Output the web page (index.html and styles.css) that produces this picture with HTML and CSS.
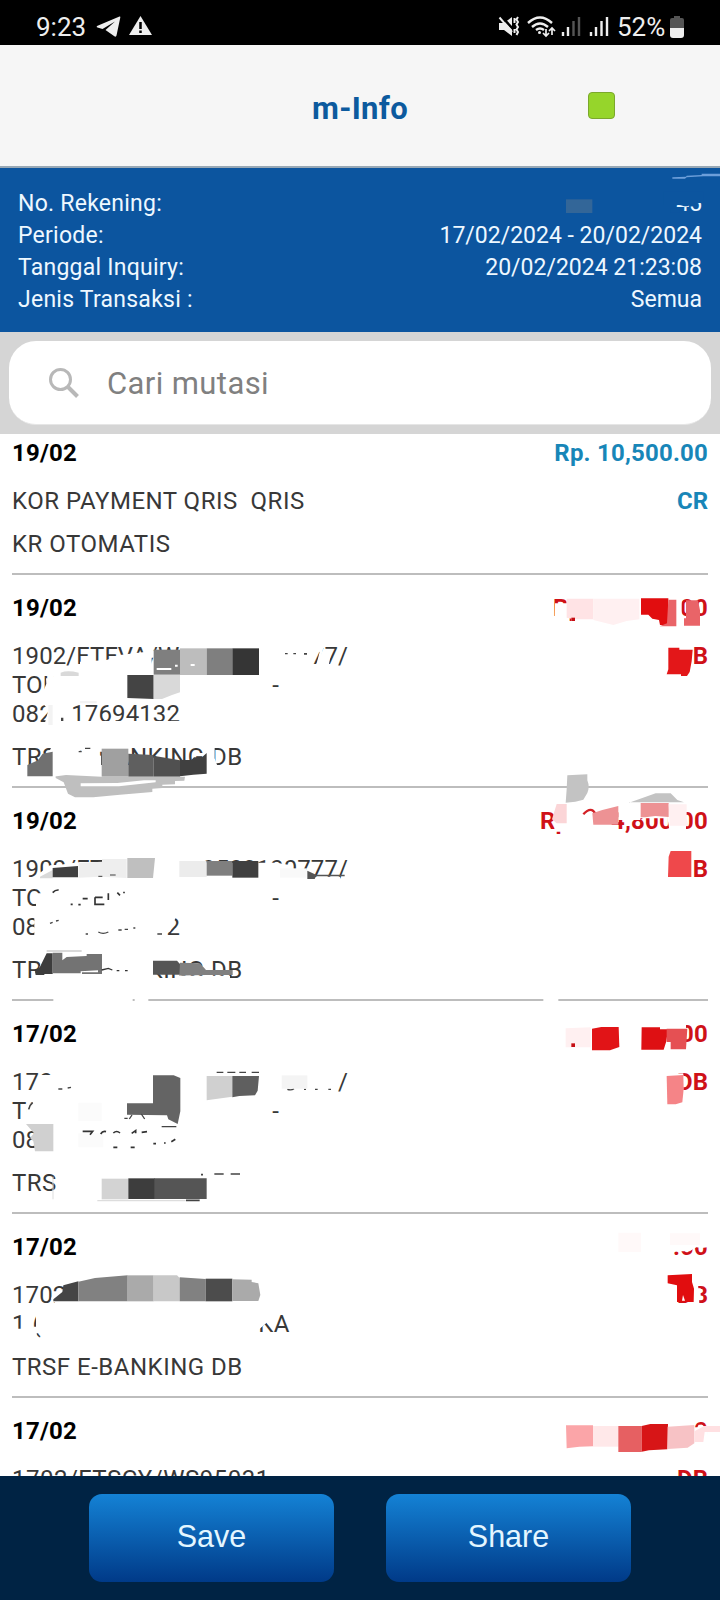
FILE: index.html
```
<!DOCTYPE html>
<html lang="id">
<head>
    <meta charset="UTF-8">
    <meta name="viewport" content="width=device-width, initial-scale=1.0">
    <title>m-Info</title>
    <link rel="stylesheet" href="styles.css">
</head>
<body>
    <div class="status-bar">
        <span class="clock">9:23</span>
        <svg class="status-left" width="58" height="24" viewBox="0 0 58 24">
            <path d="M1 11 23.500 1.500Q24.500 1 24.300 2.500L20.500 20.500Q20 22.500 18 21L9.500 15 19 6.500 6.500 14 1.500 12.500Q0 12 1 11Z" fill="#eee"/>
            <path d="M44.500 1 56 20H33Z" fill="#eee"/>
            <path d="M44.500 7v7M44.500 15.500v2.500" stroke="#000" stroke-width="2.500"/>
        </svg>
        <svg class="status-right" width="112" height="24" viewBox="0 0 112 24">
            <!-- mute -->
            <path d="M1 8h5l8-6v19l-8-6H1z" fill="#eee"/>
            <path d="M3 1 16 15" stroke="#000" stroke-width="2.500"/>
            <path d="M1.500 2.500 14 17" stroke="#eee" stroke-width="2"/>
            <path d="M16.500 3v5M16.500 14v4M20 2l-1.500 2.500L20 7l-1.500 2.500L20 12l-1.500 2.500L20 17l-1.500 3" fill="none" stroke="#eee" stroke-width="2"/>
            <!-- wifi -->
            <path d="M30 8Q42-3 54 8M34 12q8-7 16 0M38 15q4-3 8 0" fill="none" stroke="#eee" stroke-width="2.400"/>
            <circle cx="41.500" cy="17.500" r="1.500" fill="#eee"/>
            <path d="M48 14v7m-3-3 3 3 3-3M54 20v-7m-3 3 3-3 3 3" fill="none" stroke="#eee" stroke-width="1.700"/>
            <!-- signal -->
            <path d="M65 21v-4M70 21v-9" stroke="#eee" stroke-width="2.400"/>
            <path d="M75.500 21V6M81 21V2" stroke="#555" stroke-width="2.400"/>
            <path d="M93 21v-4M98 21v-9M103.500 21V6M109 21V2" stroke="#eee" stroke-width="2.400"/>
        </svg>
        <span class="percent">52%</span>
        <svg class="battery" width="14" height="22" viewBox="0 0 14 22">
            <path d="M4 0h6v2h2q2 0 2 2v8H0V4q0-2 2-2h2z" fill="#555"/>
            <path d="M0 12h14v7q0 3-3 3H3q-3 0-3-3z" fill="#eee"/>
        </svg>
    </div>

    <header class="header">
        <h1>m-Info</h1>
        <span class="indicator"></span>
    </header>

    <section class="info">
        <div class="info-row"><span>No. Rekening:</span><span>45</span></div>
        <div class="info-row"><span>Periode:</span><span>17/02/2024 - 20/02/2024</span></div>
        <div class="info-row"><span>Tanggal Inquiry:</span><span>20/02/2024 21:23:08</span></div>
        <div class="info-row"><span>Jenis Transaksi :</span><span>Semua</span></div>
        <svg class="smudge" viewBox="0 24 2160 492">
            <path d="M1990 95h120v34l-24 0-24 10h-10l-10-4h-52z" fill="#0c559f"/>
            <path d="M2012 145h26v12h-26z" fill="#0c559f"/>
            <path d="M1698 118h79v41h-79z" fill="#336698"/>
            <path d="M2017 56v-4l41-2 2-3 45-2v-4h55v8h-50l-50 3-5 4z" fill="#6d9fda"/>
        </svg>
    </section>

    <div class="search">
        <div class="search-box">
            <svg width="32" height="32" viewBox="0 0 32 32">
                <circle cx="12.500" cy="12.500" r="10" fill="none" stroke="#b8b8b8" stroke-width="3"/>
                <path d="m19.500 19.500 10 10" stroke="#b8b8b8" stroke-width="4"/>
            </svg>
            <span>Cari mutasi</span>
        </div>
    </div>

    <main class="list">
        <article class="item credit">
            <div class="row top"><b>19/02</b><b class="amount">Rp. 10,500.00</b></div>
            <div class="row">
                <div class="desc">KOR PAYMENT QRIS&nbsp; QRIS</div>
                <b class="amount">CR</b>
            </div>
            <div class="type">KR OTOMATIS</div>
        </article>

        <article class="item">
            <div class="row top"><b>19/02</b><b class="amount parts sum"><span>Rp.</span><span>.00</span></b></div>
            <div class="row">
                <div class="desc">
                    <div class="parts ref"><span>1902/FTFVA/W</span><span>77/</span></div>
                    <div class="parts name"><span>TOK</span><span>-</span></div>
                    <div class="parts phone"><span>082</span><span>17694132</span></div>
                </div>
                <b class="amount">DB</b>
            </div>
            <div class="type">TRSF E-BANKING DB</div>
            <svg class="smudge" viewBox="0 450 2160 639">
                <path d="M240 725v-15l80-5 40-15 80-10h15v60H240zM440 678h50v20h-50zM840 655h150l-20 15-15 50h-6l10-40-20 5-30 40H840zM985 655h30l-8 8h-22zM970 690h22l-6 32h-30zM138 760h14l10-8h30v54h-65l12-30zM125 830l20 25-12 45h70v-14l-12 0v-50zM190 888h350v12H190z" fill="#fff"/>
                <path d="M855 684h8v4h-8zM880 684h8v4h-8zM912 684h9v5h-9zM183 878h7v10h-7z" fill="#444"/>
                <path d="M182 743q20-8 54 0v10h-54z" fill="#d9d9d9"/>
                <path d="M145 840h13v60h-13zM240 828h50v7h-50z" fill="#f3f3f3"/>
                <path d="M461 674h79v75h-79z" fill="#7f7f7f"/>
                <path d="M540 670h80v80h-80z" fill="#bdbdbd"/>
                <path d="M620 670h77v80h-77z" fill="#7f7f7f"/>
                <path d="M697 670h80v80h-80z" fill="#353535"/>
                <path d="M382 750h79v72l-79-3z" fill="#444"/>
                <path d="M461 750h79v52l-24 8-30 12h-25z" fill="#d9d9d9"/>
                <path d="M470 732h44M525 722h8M572 720h12" stroke="#fff" stroke-width="6"/>
                <!-- type line -->
                <path d="M150 975l8-15h140v15l-60 2 65 15v70H158zM265 960h115v20H265zM618 960h26v40l8 22h-34z" fill="#fff"/>
                <path d="M236 980h9M255 970h16" stroke="#444" stroke-width="4"/>
                <path d="M82 1020l32-14 14-20 30-6v74H82z" fill="#707070"/>
                <path d="M305 971h80v84h-80z" fill="#a0a0a0"/>
                <path d="M385 986l75 4v65h-75z" fill="#5f5f5f"/>
                <path d="M460 992l80 14v49h-80z" fill="#505050"/>
                <path d="M540 1005h34l8-8h24l14-13v62l-40 3-40 5z" fill="#404040"/>
                <path d="M65 1054h105l28-4 107 5h250l-2 12-28 1v10l-38 1v10l-30 2v10l-97 8-80 8h-55l-21-11-13-34-24-13v-5z" fill="#bfbfbf"/>
                <path d="M242 1075l110-1 80-8h35v6l-110 12h-115z" fill="#fff"/>
                <!-- amount -->
                <path d="M1665 535h35v-18h33v8h15v-8h150v85h-184v-24h-10v24h-40zM1925 515h28v80h-28zM1975 515h70v85h-70z" fill="#fff"/>
                <path d="M1700 521h80v62h-58l-22-5z" fill="#ffe3e5"/>
                <path d="M1780 521h138v62l-38 5-40 12-60-15z" fill="#fff0f1"/>
                <path d="M1923 520h82v80h-25l-3-15-20-4-12-12h-22z" fill="#e10d0f"/>
                <path d="M2005 524h24v80h-50l22-9z" fill="#e96468"/>
                <path d="M2058 526h36l6 30 0 46h-48v-22h6z" fill="#e96468"/>
                <path d="M1714 578h11v10h-11z" fill="#c60e14"/>
                <!-- db -->
                <path d="M2004 660h76v94h-76z" fill="#fff"/>
                <path d="M2005 668h33v6h40l-3 35-6 32-8 12h-18v-5h-43l5-15z" fill="#e31719"/>
            </svg>
        </article>

        <article class="item">
            <div class="row top"><b>19/02</b><b class="amount parts sum wide"><span>Rp</span><span>4,800.00</span></b></div>
            <div class="row">
                <div class="desc">
                    <div class="parts ref"><span>1902/FTF</span><span>9503100777/</span></div>
                    <div class="parts name"><span>TO</span><span>-</span></div>
                    <div class="parts phone"><span>08</span><span>2</span></div>
                </div>
                <b class="amount">DB</b>
            </div>
            <div class="type">TRSF E-BANKING DB</div>
            <svg class="smudge" viewBox="0 24 2160 639">
                <path d="M120 298v-20l30-22 30-2 60-8h95v52zM535 230h45l8 18h242l34 6 25 20 40 2 20 18H535zM950 290h70v12h-90z" fill="#fff"/>
                <path d="M120 290l38-20v25h-38z" fill="#d9d9d9"/>
                <path d="M158 264l76-6v34h-76z" fill="#404040"/>
                <path d="M236 249l70-4v-8h74v57l-80-4-65 3z" fill="#eee"/>
                <path d="M382 234h83l-6 60h-77z" fill="#bfbfbf"/>
                <path d="M538 243h82v48h-82z" fill="#ececec"/>
                <path d="M620 243h77v44h-77z" fill="#7f7f7f"/>
                <path d="M697 243h78v50h-78z" fill="#404040"/>
                <path d="M840 265h80v28h-80z" fill="#f9f9f9"/>
                <path d="M922 272l26 12h86v5h-86l-4 8h-22z" fill="#555"/>
                <path d="M295 289h12M330 285h17" stroke="#404040" stroke-width="3"/>
                <path d="M108 340h30v45h-30zM103 400h36v70h-36zM500 405h30l-20 50h-25z" fill="#fff"/>
                <path d="M158 338q8-9 18-8M212 373h6M235 374h7M248 356h15M285 352h23M285 352v21h28M325 340v20M352 338l8 8M372 335v5" fill="none" stroke="#333" stroke-width="5"/>
                <path d="M150 430l8-3M168 423l8-2M257 462h7M295 456q14 8 30 0M355 450h10M374 448h10M400 444h6M472 462h14" fill="none" stroke="#444" stroke-width="4"/>
                <!-- type line -->
                <path d="M130 510l115-3v6h62v20h80v62H190l-85 0 20-50zM383 530h76v65h-76zM459 530h80v14h-80z" fill="#fff"/>
                <path d="M105 575l15-15 20-40h18v62h-25v3h-26z" fill="#3d3d3d"/>
                <path d="M158 518h29v23l13-10 60-3v-6h46v60h-60v-5h48v-6l-52 3v6h-84z" fill="#737373"/>
                <path d="M140 513h105" stroke="#ccc" stroke-width="4"/>
                <path d="M305 570l20-5 12 5M350 572h8M375 572h8" fill="none" stroke="#333" stroke-width="4"/>
                <path d="M459 542h72l11 12v30h-83z" fill="#555"/>
                <path d="M540 548l60 2 18 20h80v15h-80l-80 2z" fill="#808080"/>
                <path d="M540 587h150v12h-150z" fill="#fff"/>
                <!-- divider wiped out in places -->
                <path d="M160 652h238v16H160zM404 652h41v16h-41zM1630 652h45v16h-45z" fill="#fff"/>
                <!-- amount -->
                <path d="M1664 85h86v70h-86zM1855 60h66v60h-66zM1855 85h140v30h-140zM1998 85h60v65h-50z" fill="#fff"/>
                <path d="M1670 72h30v58h-30l-14-12z" fill="#fbd5d7"/>
                <path d="M1702-14l60-3v18q8 20 0 38l-12 20-24 6-29 3 3-40z" fill="#c3c3c3"/>
                <path d="M1750 103q18-20 30-10l10 12" fill="none" stroke="#d32025" stroke-width="7"/>
                <path d="M1777 100l30-10 48-12v56h-75z" fill="#ed9294"/>
                <path d="M1887 68l40-14 40-14h45l20 20 20 7H1887z" fill="#c3c3c3"/>
                <path d="M1922 69h84v42l-40-3-30 4h-14z" fill="#ed9294"/>
                <path d="M2006 73h54v42l5 22h-55z" fill="#fff0f1"/>
                <!-- db -->
                <path d="M2004 205h75v90h-75z" fill="#fff"/>
                <path d="M2006 230l6-17h62v78h-70z" fill="#ef484b"/>
            </svg>
        </article>

        <article class="item">
            <div class="row top"><b>17/02</b><b class="amount">00</b></div>
            <div class="row">
                <div class="desc">
                    <div class="parts ref"><span>170</span><span>/</span></div>
                    <div class="parts name"><span>TO</span><span>-</span></div>
                    <div class="parts phone"><span>08</span></div>
                </div>
                <b class="amount">DB</b>
            </div>
            <div class="type">TRS</div>
            <svg class="smudge" viewBox="0 -27 2160 639">
                <path d="M120 195h50v60h-60zM100 270h60v65H80l10-35zM80 280h50v50H80z" fill="#fff"/>
                <path d="M175 237h12M203 234l10-2M650 187h20M682 187h24M718 187h20M755 187h22M862 238q12 4 20-2M912 238h6M945 238h8M985 238h8" fill="none" stroke="#444" stroke-width="4"/>
                <path d="M86 298q2-12 12-20" fill="none" stroke="#444" stroke-width="5"/>
                <path d="M459 196h62l20 8v100l-8 38-28-14-4-12-120-2v-34h78z" fill="#646464"/>
                <path d="M620 198h77v62l-77 11z" fill="#d0d0d0"/>
                <path d="M697 198h80l-4 44-8 14-47 2-21 4z" fill="#5f5f5f"/>
                <path d="M845 196h77v40h-77z" fill="#f4f4f4"/>
                <path d="M235 278h70v55h-70zM235 370h75v42h-75z" fill="#fbfbfb"/>
                <path d="M373 325h10M396 315l-8 12M424 312l10 15M485 350h44" fill="none" stroke="#444" stroke-width="4"/>
                <path d="M78 342h82v82h-55l-5-30-10-10 12-14z" fill="#d0d0d0"/>
                <path d="M248 364h30l-8 10M302 372q6-10 16-7M340 369q10-9 20 0M395 370l12-8v8M425 367l16-2M340 412h12M392 412h12M460 401h8M492 399h5M514 395l12-7" fill="none" stroke="#333" stroke-width="5"/>
                <path d="M159 500v68" stroke="#ddd" stroke-width="3"/>
                <path d="M305 506h80v62h-80z" fill="#d3d3d3"/>
                <path d="M385 505h80v62h-80z" fill="#3d3d3d"/>
                <path d="M463 505h157v62h-157z" fill="#555"/>
                <path d="M292 570h265v4h-265z" fill="#ddd"/>
                <path d="M558 571h41M603 494h6M643 492h28M692 492h28" stroke="#444" stroke-width="5"/>
                <!-- amount -->
                <path d="M2010 30h48v80h-48z" fill="#fff"/>
                <path d="M1697 55l75-3v60h-75z" fill="#fff0f1"/>
                <path d="M1714 100h11v11h-11z" fill="#c60e14"/>
                <path d="M1776 56l28-5h52l2 60-28 10h-54z" fill="#e11417"/>
                <path d="M1925 52h55v6h24l-5 36-8 25h-67z" fill="#de1013"/>
                <path d="M2000 56h62l-4 62h-46v-22h-12z" fill="#e55053"/>
                <!-- db -->
                <path d="M2004 190h46v95h-46z" fill="#fff"/>
                <path d="M2000 198l50-3 1 42-4 40-20 6h-25z" fill="#f58487"/>
            </svg>
        </article>

        <article class="item">
            <div class="row top"><b>17/02</b><b class="amount">.00</b></div>
            <div class="row">
                <div class="desc">
                    <div class="parts ref"><span>1702</span></div>
                    <div class="parts holder"><span>1 (</span><span>KA</span></div>
                </div>
                <b class="amount">DB</b>
            </div>
            <div class="type">TRSF E-BANKING DB</div>
            <svg class="smudge" viewBox="0 -18 2160 552">
                <path d="M165 250l-12-16 40-30h20v46zM40 326h70v20H40zM108 275h24v65h-32v-20h8zM775 275h54l-18 44-11-11-25 22z" fill="#fff"/>
                <path d="M160 244l0-6 27-22 3-20 45-12v60z" fill="#454545"/>
                <path d="M235 185l50-11 98-8v78H235z" fill="#818181"/>
                <path d="M383 166h78v78h-78z" fill="#aaa"/>
                <path d="M461 166h70l8 8v70h-78z" fill="#c8c8c8"/>
                <path d="M539 172l78 5v67h-78z" fill="#818181"/>
                <path d="M617 176h80v68h-80z" fill="#4c4c4c"/>
                <path d="M697 178l58 1v7l20 4 6 35-6 18h-78z" fill="#aaa"/>
                <!-- amount -->
                <path d="M2000 35h135v45l-30 4-16-2-20 12h-68z" fill="#fff"/>
                <path d="M1855 38h68v58h-68zM2010 40h90v35h-90z" fill="#fff9f9"/>
                <!-- db -->
                <path d="M2080 190h14l4 60h-18zM2094 205h8v32h-8z" fill="#fff"/>
                <path d="M2003 166l73-4v24l6 20-1 40h-50v-50l-28-6z" fill="#e10d0f"/>
                <path d="M2049 225l6 17h-9z" fill="#fff"/>
            </svg>
        </article>

        <article class="item">
            <div class="row top"><b>17/02</b><b class="amount">0</b></div>
            <div class="row">
                <div class="desc">1702/FTSCY/WS95031</div>
                <b class="amount">DB</b>
            </div>
            <svg class="smudge" viewBox="0 534 2160 234">
                <path d="M2080 622h12l4-8h10l16 12v44h-50z" fill="#fff"/>
                <path d="M1698 616h81v63l-41 1-38 5z" fill="#fba5a8"/>
                <path d="M1779 618h77v62h-77z" fill="#ffe8e9"/>
                <path d="M1855 618h70v78h-70z" fill="#e66062"/>
                <path d="M1925 618l26-6h53l-2 76-55 3-22 4z" fill="#d71517"/>
                <path d="M2003 620l80-5v55l-20 13-60 4z" fill="#f7c2c5"/>
                <path d="M2083 634l30-16h47v18h-46l-4 30h-27z" fill="#ffe0e2"/>
            </svg>
        </article>
    </main>

    <footer class="footer">
        <button>Save</button>
        <button>Share</button>
    </footer>
</body>
</html>
```
FILE: styles.css
```
* {
    box-sizing: border-box;
}

body {
    margin: 0;
    height: 1600px;
    display: flex;
    flex-direction: column;
    font-family: Roboto, sans-serif;
    background: #fff;
    overflow: hidden;
}

/* status bar */
.status-bar {
    flex: none;
    height: 45px;
    padding: 8px 36px 0;
    display: flex;
    align-items: center;
    background: #000;
    color: #eee;
    font-size: 26px;
}

.clock {
    width: 60px;
}

.status-right {
    margin-left: auto;
    margin-right: 7px;
}

.percent {
    width: 53px;
}

/* header */
.header {
    flex: none;
    height: 123px;
    display: grid;
    grid-template-columns: 1fr auto 1fr;
    align-items: center;
    background: #f6f6f6;
    border-bottom: 2px solid #98a8b5;
}

.header h1 {
    grid-column: 2;
    margin: 5px 0 0;
    font-size: 31px;
    letter-spacing: 0.3px;
    color: #0c5a9e;
}

.indicator {
    width: 27px;
    height: 27px;
    margin-left: 180px;
    background: #96d52b;
    border: 1px solid #7ba82c;
    border-radius: 4px;
}

/* account info */
.info {
    flex: none;
    position: relative;
    height: 164px;
    padding: 20px 18px;
    background: #0c559f;
    color: #eef8ff;
    font-size: 23px;
    line-height: 32px;
}

.info-row {
    display: flex;
    justify-content: space-between;
}

.info-row span:first-child {
    letter-spacing: 0.25px;
}

/* search */
.search {
    flex: none;
    height: 102px;
    padding: 9px;
    background: #d5d5d5;
}

.search-box {
    height: 84px;
    padding: 1px 0 0 39px;
    display: flex;
    align-items: center;
    gap: 27px;
    background: #fff;
    border-radius: 27px;
    border-bottom: 1px solid #e6e6e6;
    font-size: 31px;
    letter-spacing: 0.4px;
    color: #808080;
}

/* transactions */
.list {
    flex: 1;
    min-height: 0;
    overflow: hidden;
    padding: 0 12px;
    font-size: 24px;
    line-height: 29px;
    color: #383838;
}

.item {
    position: relative;
    padding: 19px 0 14px;
    border-bottom: 2px solid #bdbdbd;
}

.item:first-child {
    padding-top: 5px;
}

.row {
    display: flex;
    justify-content: space-between;
}

.top {
    margin-bottom: 19px;
    letter-spacing: 0.2px;
    color: #000;
}

.amount {
    color: #cf1118;
}

.credit .amount {
    color: #1886b8;
}

.desc,
.type {
    letter-spacing: 0.5px;
}

.type {
    margin-top: 14px;
}

/* lines with a blanked out middle */
.parts {
    display: flex;
    justify-content: space-between;
}

.ref,
.name,
.phone {
    letter-spacing: 0.1px;
}

.ref {
    width: 336px;
}

.name {
    width: 267px;
}

.phone {
    width: 168px;
}

.holder {
    width: 278px;
}

.sum {
    width: 155px;
}

.sum.wide {
    width: 168px;
}

.smudge {
    position: absolute;
    top: 0;
    left: 0;
    width: 720px;
    overflow: visible;
    pointer-events: none;
    z-index: 1;
}

.item .smudge {
    left: -12px;
}

/* bottom buttons */
.footer {
    flex: none;
    position: relative;
    z-index: 2;
    height: 124px;
    display: flex;
    justify-content: center;
    align-items: center;
    gap: 52px;
    background: #002344;
}

.footer button {
    width: 245px;
    height: 88px;
    padding: 0 0 4px;
    border: none;
    border-radius: 13px;
    background: linear-gradient(#1482d5, #003a88);
    color: #e4f6ff;
    font: 30.5px "Liberation Sans", sans-serif;
}
```
